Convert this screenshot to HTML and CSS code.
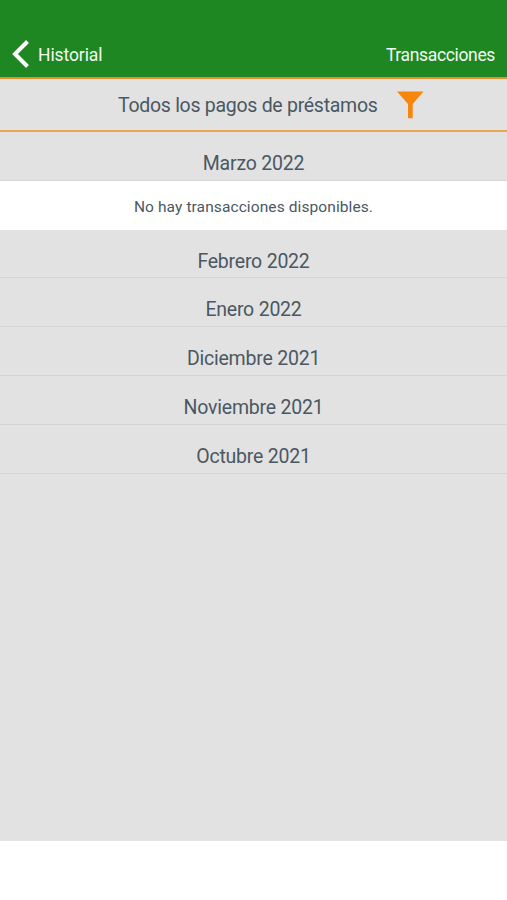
FILE: index.html
```html
<!DOCTYPE html>
<html lang="es">
<head>
  <meta charset="UTF-8">
  <title>Transacciones</title>
  <link rel="stylesheet" href="styles.css">
</head>
<body>
  <div class="container">
    <header class="header">
      <a class="back" href="#">
        <svg class="back-icon" width="18" height="30" viewBox="0 0 18 30">
          <path d="M15.5 2.5 L3 15 L15.5 27.5" fill="none" stroke="#fff" stroke-width="4"/>
        </svg>
        <span>Historial</span>
      </a>
      <span class="title">Transacciones</span>
    </header>

    <div class="filter-bar">
      <span class="filter-label">Todos los pagos de préstamos</span>
      <svg class="filter-icon" width="28" height="28" viewBox="0 0 28 28">
        <path d="M0 0.5 H26.5 L15.7 13 V27.3 H11 V13 Z" fill="#f8860d"/>
      </svg>
    </div>

    <main class="months">
      <div class="month">Marzo 2022</div>
      <div class="empty">No hay transacciones disponibles.</div>
      <div class="month">Febrero 2022</div>
      <div class="month">Enero 2022</div>
      <div class="month">Diciembre 2021</div>
      <div class="month">Noviembre 2021</div>
      <div class="month">Octubre 2021</div>
    </main>
  </div>
</body>
</html>
```

FILE: styles.css
```css
:root {
  --green: #1f8722;
  --orange: #eba650;
  --gray: #e2e2e2;
  --text-color: #4a5862;
}

* {
  box-sizing: border-box;
}

body {
  margin: 0;
  background-color: white;
  color: var(--text-color);
  font-family: Roboto, "Open Sans", sans-serif;
}

.container {
  height: 841px;
  background-color: var(--gray);
}

.header {
  display: flex;
  justify-content: space-between;
  align-items: center;
  height: 79px;
  padding: 33px 12px 0;
  background-color: var(--green);
  border-bottom: 2px solid #e8902c;
  color: #f2faf2;
  font-size: 17.5px;
  letter-spacing: -0.1px;
}

.back {
  display: flex;
  align-items: center;
  gap: 8px;
  color: inherit;
  text-decoration: none;
}

.back-icon {
  margin-top: -2px;
}

.title {
  letter-spacing: -0.35px;
}

.filter-bar {
  display: flex;
  align-items: center;
  height: 53px;
  border-bottom: 2px solid var(--orange);
  font-size: 19.5px;
  letter-spacing: -0.28px;
}

.filter-label {
  width: 260px;
  margin-left: 118px;
  padding-top: 2px;
  white-space: nowrap;
}

.filter-icon {
  margin-left: 19px;
}

.month {
  height: 48.8px;
  padding-top: 20px;
  border-bottom: 1px solid #d3d5d7;
  font-size: 19.5px;
  line-height: 24px;
  letter-spacing: -0.22px;
  text-align: center;
}

.empty {
  height: 48.8px;
  padding-top: 2px;
  background-color: white;
  font-size: 15.5px;
  line-height: 48px;
  letter-spacing: 0.1px;
  text-align: center;
}
```
